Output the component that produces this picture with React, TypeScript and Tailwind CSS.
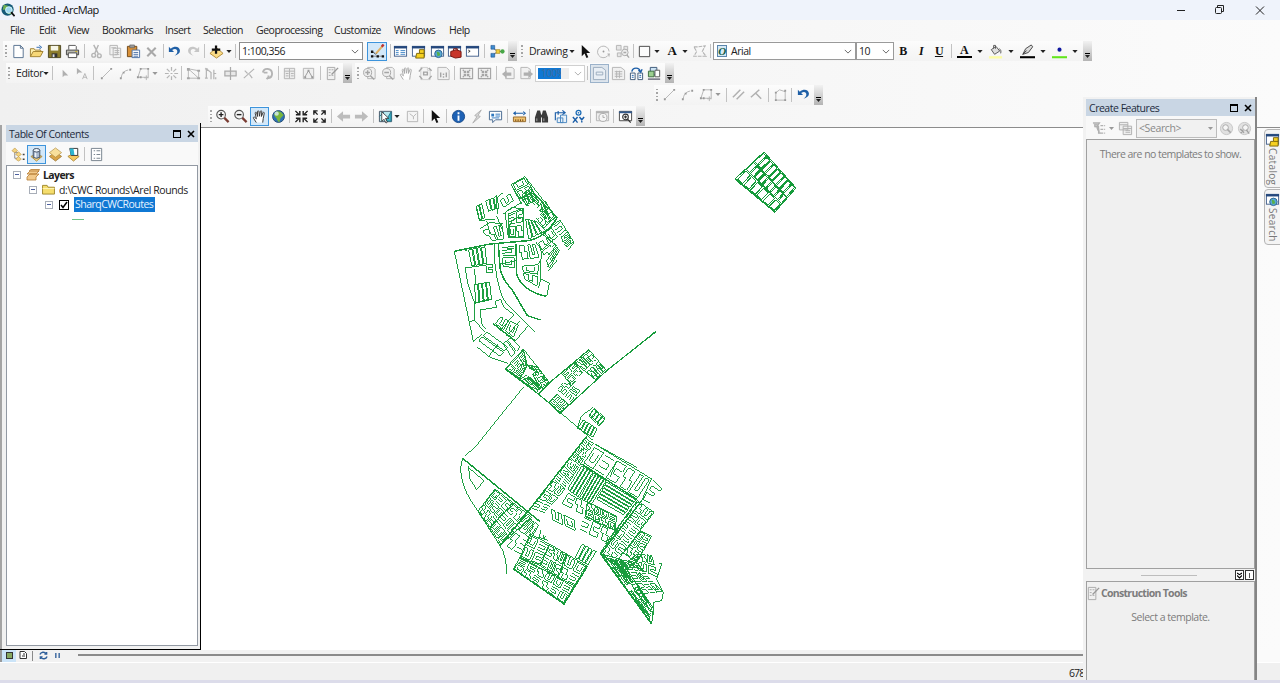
import React from "react";

type Pt = [number, number];
type Quad = [Pt, Pt, Pt, Pt];

/* ---------- icons (16 x 16 grid) ---------- */

const G = "#b4b4b4";
const mag = (c: string, h: string, plus: boolean) => (
  <>
    <circle cx="6.5" cy="6" r="4.6" fill="#f7f7f7" stroke={c} strokeWidth="1.2" />
    <path d="M10 9.5l4.5 4.5" stroke={h} strokeWidth="2.4" />
    <path d={plus ? "M4 6h5M6.5 3.5v5" : "M4 6h5"} stroke="#222" strokeWidth="1.5" />
  </>
);
const hand = (c: string) => (
  <path d="M4.6 14.5L1.6 9.8c-.5-1 .6-1.600 1.300-.9L4.700 10.500 3.400 4.500c-.2-1.200 1.200-1.400 1.500-.4L6 8 5.800 2.800c0-1.200 1.500-1.200 1.600 0L8 7.700l.9-5.100c.2-1.100 1.600-.9 1.500.2L10 8l1.700-4c.4-1 1.700-.5 1.400.5L12 10l-.6 4.500" fill="#fff" stroke={c} strokeWidth="1" />
);
const page = (c: string, fill = "#fff") => <path d="M3 1.500h7l3 3v10H3zM10 1.500v3h3" fill={fill} stroke={c} />;
const windowBox = (
  <>
    <rect x="1.500" y="2.500" width="13" height="10.500" fill="#fff" stroke="#44608c" />
    <path d="M1 3.500h14" stroke="#24477c" strokeWidth="2.500" />
  </>
);
const undoArrow = (c: string) => (
  <path d="M2 3v5.500h5.500L5.500 6.500c3-2 5.500-1 5.500 1.500 0 2-1 3-3 4.500 4-1 6-3 5.800-5.500C13.500 3 8.500 1.500 4 5z" fill={c} />
);
const editPoly = (
  <>
    <path d="M2 12L5 3h8v9z" fill="none" stroke={G} />
    <path d="M11 10v5M8.500 12.500h5" stroke={G} />
    <path d="M1 11h2v2H1zM4 2h2v2H4zM12 2h2v2h-2zM4 11h2v2H4z" fill="#999" />
  </>
);

const icons: Record<string, React.ReactNode> = {
  new: page("#55708f"),
  open: (
    <>
      <path d="M1.500 13.500V5h4l1 1.500h6v2" fill="#fdf0b0" stroke="#a08030" />
      <path d="M1.500 13.500L4.500 8h10.500l-3 5.500z" fill="#f7d878" stroke="#a08030" />
      <path d="M8 3.500h4M11 1.500l2.500 2-2.500 2" stroke="#2a66b0" fill="none" />
    </>
  ),
  save: (
    <>
      <path d="M1.500 1.500h13v13h-13z" fill="#8c7c2c" stroke="#4c4420" />
      <path d="M4 2h8v5H4z" fill="#f6f6e8" />
      <path d="M5 10h6v4H5z" fill="#333" />
      <path d="M6 11h2v3H6z" fill="#ddd" />
    </>
  ),
  print: (
    <>
      <path d="M4 6V1.500h7l1 1V6" fill="#fff" stroke="#555" />
      <path d="M1.500 6.500h13v5h-13z" fill="#b9b9b0" stroke="#444" />
      <path d="M3.500 9.500h9v5h-9z" fill="#fff" stroke="#444" />
      <path d="M11 8h2" stroke="#d0b020" />
    </>
  ),
  cut: (
    <>
      <path d="M5 1l5 9.500M10 1L6 10.500" stroke={G} strokeWidth="1.500" />
      <circle cx="5" cy="12" r="2" fill="none" stroke={G} strokeWidth="1.500" />
      <circle cx="11" cy="12.500" r="2" fill="none" stroke={G} strokeWidth="1.500" />
    </>
  ),
  copy: <path d="M2 1.500h8v10H2zM5.500 4.500h8v10h-8zM7 7h5M7 9h5M7 11h5M3.500 4h5" fill="#f2f2f2" stroke={G} />,
  paste: (
    <>
      <path d="M1.500 2.500h10v11h-10z" fill="#d89038" stroke="#704818" />
      <path d="M4 1h5v3H4z" fill="#999" stroke="#555" strokeWidth=".6" />
      <path d="M6.500 6.500h8v8h-8zM8 9h5M8 11h5M8 13h5" fill="#fff" stroke="#4a6fa5" />
    </>
  ),
  del: <path d="M3.500 4l9 9M12.500 4l-9 9" stroke="#a8a8a8" strokeWidth="2.200" />,
  undo: undoArrow("#1f5fa6"),
  redo: <g transform="translate(16 0) scale(-1 1)">{undoArrow("#c6c6c6")}</g>,
  add: (
    <>
      <path d="M8 4l7 6-7 5-7-5z" fill="#fbdc86" stroke="#b08a38" />
      <path d="M3 6h9M7.500 1.500v9" stroke="#111" strokeWidth="2.400" />
    </>
  ),
  editortb: (
    <>
      <path d="M2 13h11" fill="none" stroke="#888" />
      <path d="M1 7h2.500v2.500H1zM1 12h2.500v2.500H1zM7 12h2.500v2.500H7zM12.500 12H15v2.500h-2.500z" fill="#111" />
      <path d="M3 8l3 3 3-3" stroke="#333" fill="none" />
      <path d="M6.500 10l7-8" stroke="#e2b060" strokeWidth="2.200" />
      <path d="M12.500 3L14.500.5" stroke="#b33" strokeWidth="2.500" />
    </>
  ),
  table: (
    <>
      {windowBox}
      <path d="M3 7h3M3 9h3M3 11h3M8 7h5M8 9h5M8 11h5" stroke="#4386c5" />
    </>
  ),
  catalog: (
    <>
      {windowBox}
      <path d="M6 10h3V6h5v9H5z" fill="#f5d020" stroke="#7c6408" />
      <path d="M9 10h5" stroke="#7c6408" />
    </>
  ),
  searchw: (
    <>
      {windowBox}
      <circle cx="9" cy="10.500" r="4" fill="#58a8d8" stroke="#2c6390" />
      <path d="M7 8l3 1 1 3-3 1z" fill="#57b048" />
    </>
  ),
  toolbox: (
    <>
      {windowBox}
      <path d="M4 8l6-2 5 2v6l-6 1-5-2z" fill="#c8362b" stroke="#74150f" />
      <path d="M7 7V5h4v2" fill="none" stroke="#74150f" />
    </>
  ),
  python: (
    <>
      {windowBox}
      <path d="M3.500 6.500l2 1.200-2 1.200" stroke="#333" fill="none" />
    </>
  ),
  model: (
    <>
      <path d="M3 4l5 4-5 4M8 8h5" stroke="#555" fill="none" />
      <path d="M1 1.500h4v4H1zM1 10h4v4H1z" fill="#3d8bd0" stroke="#1a4f8a" strokeWidth=".6" />
      <path d="M6.500 6h4v4h-4z" fill="#f2cf3a" stroke="#957a10" strokeWidth=".6" />
      <circle cx="13.300" cy="8" r="2.300" fill="#47a747" />
    </>
  ),
  arrow: <path d="M4 1v12l3-2.800 2 4.800 2-.9-2-4.600h4z" fill="#111" />,
  rotate: (
    <>
      <path d="M12.500 12.500A6.200 6.200 0 1 1 14 8" fill="none" stroke={G} />
      <path d="M12 10h3l-1 4z" fill={G} />
      <circle cx="8" cy="8" r="1" fill="#999" />
    </>
  ),
  zoomsel: (
    <>
      <path d="M1.500 1.500h5v5h-5zM9.500 2.500h4v4h-4zM2.500 9.500h4v4h-4z" fill="#e6e6e6" stroke={G} />
      <circle cx="10.500" cy="9" r="3.500" fill="#eee" stroke="#aaa" />
      <path d="M12.500 11.500l2.500 3M9 9h3" stroke="#aaa" strokeWidth="1.500" />
    </>
  ),
  rect: <path d="M2.500 2.500h11v11h-11z" fill="#fcfcfc" stroke="#444" />,
  vert: <path d="M2 3h5l7-1-3 6 4 5H2l3-5z" fill="none" stroke={G} strokeDasharray="4 1" strokeWidth="1.200" />,
  bucket: (
    <>
      <path d="M3.500 6l5-3.500 4 5-5.500 3.500z" fill="#ddd" stroke="#555" />
      <path d="M6 5V1.500h2V5M12 5c2 1 2 3 1.500 5" stroke="#555" fill="none" />
      <path d="M1 13h14v2.500H1z" fill="#fdfda6" />
    </>
  ),
  pen: (
    <>
      <path d="M3 11l3-6 6-4 1.500 2L9 9z" fill="#ddd" stroke="#444" />
      <path d="M3 11l4-4" stroke="#333" />
      <path d="M0 13h16v2.200H0z" fill="#000" />
    </>
  ),
  marker: (
    <>
      <circle cx="8" cy="6" r="2.200" fill="#1018a0" />
      <path d="M0 13h16v2.200H0z" fill="#62e51c" />
    </>
  ),
  ediArrow: <path d="M6 4v8l2-2h4z" fill="#b0b0b0" />,
  ediArrowA: (
    <>
      <path d="M2 2v7l2-2h4z" fill="#b0b0b0" />
      <path d="M8 14l2.500-6 2.500 6M9 12h3" stroke={G} fill="none" />
    </>
  ),
  line: (
    <>
      <path d="M3.500 12.500l9-9" stroke={G} />
      <path d="M2 12h2v2H2zM12 2h2v2h-2z" fill="#999" />
    </>
  ),
  arc: (
    <>
      <path d="M3.500 12.500Q4 5 12.500 4" stroke={G} fill="none" strokeDasharray="5 2" />
      <path d="M2 12h2v2H2zM12 3h2v2h-2zM5 6h2v2H5z" fill="#999" />
    </>
  ),
  poly: editPoly,
  star: <path d="M8 1v4M8 11v4M1 8h4M11 8h4M3 3l3 3M10 10l3 3M13 3l-3 3M6 10l-3 3M7 8h2" stroke={G} strokeWidth="1.300" />,
  ed1: (
    <>
      <path d="M2.500 3v10h11zM2.500 3l11 2v8" fill="none" stroke={G} />
      <path d="M1 2h3v3H1zM1 12h3v2H1zM12 12h3v2h-3zM12 4h3v2h-3z" fill="#a6a6a6" />
    </>
  ),
  ed2: <path d="M2.500 13V3l5 4v7M1 3h3M1 13h3M10.500 4v10M10 8h3M12.500 12v2" fill="none" stroke={G} strokeWidth="1.300" />,
  ed3: <path d="M2 5.500h12v5H2zM8 1v14" fill="#e8e8e8" stroke="#aaa" strokeWidth="1.300" />,
  ed4: <path d="M3 13L14 3M4 5l3 3M9 9l3 4" stroke={G} strokeWidth="1.200" />,
  ed5: <path d="M3 7a5 5 0 1 1 6 6v-3M9 12l-2 2M4 7h4" fill="none" stroke={G} strokeWidth="2" />,
  ed6: <path d="M2.500 2.500h11v11h-11zM2.500 5.500h11M8 3v10M4 8h3M4 10.500h3M9.500 8h3M9.500 10.500h3" fill="#ececec" stroke={G} />,
  ed7: (
    <>
      <path d="M2.500 2.500h11v11h-11z" fill="#f0f0f0" stroke={G} />
      <path d="M4 12l4-7 4 7" stroke="#999" fill="none" />
      <path d="M7 4h2v2H7zM3.500 11h2v2h-2zM11 11h2v2h-2z" fill="#999" />
    </>
  ),
  ed8: (
    <>
      <path d="M2.500 1.500h8v13h-8zM4 4h2M4 7h2M4 10h2M7 4h2M7 10h2" fill="#f0f0f0" stroke="#aaa" />
      <path d="M7 9l7-7" stroke="#999" strokeWidth="1.500" />
    </>
  ),
  lzin: (
    <>
      <path d="M6 1.500h6l2 2v10H6z" fill="#f1f1f1" stroke={G} />
      <circle cx="6" cy="7" r="4.300" fill="#eee" stroke="#a5a5a5" />
      <path d="M9 10.500l4 4M3.500 7h5M6 4.500v5" stroke="#a5a5a5" strokeWidth="1.500" />
    </>
  ),
  lzout: (
    <>
      <path d="M6 1.500h6l2 2v10H6z" fill="#f1f1f1" stroke={G} />
      <circle cx="6" cy="7" r="4.300" fill="#eee" stroke="#a5a5a5" />
      <path d="M9 10.500l4 4M3.500 7h5" stroke="#a5a5a5" strokeWidth="1.500" />
    </>
  ),
  lhand: hand("#a8a8a8"),
  lfull: (
    <>
      {page("#cfcfcf", "#f4f4f4")}
      <path d="M1.500 6V5l3-3M11.500 2l3 3M1.500 10.500l3 3.500M14.500 10.500l-3 3.500M6 6.500h4v3H6z" stroke="#a5a5a5" strokeWidth="1.500" />
    </>
  ),
  l11: (
    <>
      <path d="M2 1.500h9l3 3v10H2z" fill="#f1f1f1" stroke={G} />
      <path d="M5 7v5M11 7v5M8 8v1.500M8 11v1.500" stroke="#a5a5a5" strokeWidth="1.500" />
    </>
  ),
  lfix: <path d="M1.500 2.500h13v11h-13zM4 4l3 3M12 4L9 7M4 12l3-3M12 12L9 9M5 7h2V5M9 5v2h2M5 9h2v2M11 9H9v2" fill="#efefef" stroke="#a5a5a5" strokeWidth="1.200" />,
  lback: (
    <>
      <path d="M5 1.500h7l2 2v10H5z" fill="#f1f1f1" stroke={G} />
      <path d="M1 8.500l5-4v2.500h5v3.500H6V13z" fill="#b0b0b0" />
    </>
  ),
  lfwd: (
    <>
      <path d="M2 1.500h7l3 2v10H2z" fill="#f1f1f1" stroke={G} />
      <path d="M15 8.500l-5-4v2.500H5v3.500h5V13z" fill="#b0b0b0" />
    </>
  ),
  ltog: <path d="M1.500 1.500h9l4 3v10h-13zM4.500 6.500h7v3h-7z" fill="#e9eff5" stroke="#9aabbd" />,
  lfocus: <path d="M1.500 1.500h9l4 3v10h-13zM4 6h8M4 8.500h8M4 11h8M6 5v8M9 5v8" fill="#f0f0f0" stroke={G} />,
  lchg: (
    <>
      <path d="M1.500 7.500h5v7h-5zM9.500 7.500h5v7h-5z" fill="#fff" stroke="#3c5677" />
      <path d="M3 6c1-5 8-5 9 0M10 4.500l2.500 2 1.500-3" fill="none" stroke="#1c5ea8" strokeWidth="1.500" />
      <path d="M3 10h2M3 12h2M11 10h2M11 12h2" stroke="#1c5ea8" />
    </>
  ),
  ldd: (
    <>
      <path d="M3.500 1.500h7v8h-7z" fill="#cde4f5" stroke="#3c5677" />
      <path d="M1.500 5.500h6v6h-6z" fill="#9ccf90" stroke="#3c6b40" />
      <path d="M8.500 4.500h5v7h-5z" fill="#fff" stroke="#555" />
      <path d="M1 14h13" stroke="#667" strokeWidth="1.500" />
    </>
  ),
  par: <path d="M2 11l8-8M6 13l8-8" stroke="#b0b0b0" strokeWidth="1.600" />,
  perp: <path d="M2 11l9-8M7 6.500l6 6" stroke="#b0b0b0" strokeWidth="1.600" />,
  rectedit: (
    <>
      <path d="M3 14V6l4-3 6 2v9z" fill="none" stroke={G} />
      <path d="M2 5h2v2H2zM2 13h2v2H2zM12 13h2v2h-2zM12 3h2v2h-2z" fill="#999" />
    </>
  ),
  zin: mag("#555", "#7a3b32", true),
  zout: mag("#555", "#7a3b32", false),
  hand: hand("#333"),
  globe: (
    <>
      <circle cx="8" cy="8" r="6.300" fill="#2f71b6" stroke="#244c70" />
      <path d="M6 2.500c4-1 6 2 7.500 4L10 10l-1 4c-3-1-2-4-4-5L3 6z" fill="#79b63c" />
      <circle cx="6" cy="5" r="2.300" fill="#e3f4ff" opacity=".75" />
    </>
  ),
  fixin: <path d="M1.500 2l3.500 3.500M14.500 2L11 5.500M1.500 14L5 10.500M14.500 14L11 10.500M2 6.200h4.200V2M14 6.200H9.800V2M2 9.800h4.200V14M14 9.800H9.800V14" fill="none" stroke="#222" strokeWidth="1.500" />,
  fixout: <path d="M2.500 2.500L6 6M13.500 2.500L10 6M2.500 13.500L6 10M13.500 13.500L10 10M2 6V2h4M14 6V2h-4M2 10v4h4M14 10v4h-4" fill="none" stroke="#222" strokeWidth="1.500" />,
  back: <path d="M1 8l6.500-5.500v3.500H15v4H7.500v3.500z" fill="#bcbcbc" />,
  fwd: <path d="M15 8L8.500 2.500V6H1v4h7.500v3.500z" fill="#bcbcbc" />,
  selfeat: (
    <>
      <path d="M1.500 2.500h13v11h-13z" fill="#b9e8ee" stroke="#456" />
      <path d="M14 3v10H8zM1.500 8l5-5" fill="#3bb6c8" stroke="#26748a" />
      <path d="M4 3v10l2.500-2 2 4 1.500-1-2-4h3.500z" fill="#fff" stroke="#222" strokeWidth=".8" />
    </>
  ),
  clr: <path d="M2.500 2.500h11v11h-11zM5 5l4 3 3-3M9 8v3" fill="#f4f4f4" stroke={G} />,
  info: (
    <>
      <circle cx="8" cy="8" r="6.500" fill="#1e62b5" stroke="#174a8a" />
      <path d="M8 7v5.500M8 3.500v2" stroke="#fff" strokeWidth="2" />
    </>
  ),
  bolt: <path d="M12 1L5 7l2.500 1L3 15l8-7-2.500-1z" fill="#d7d7d7" stroke="#b0b0b0" />,
  popup: (
    <>
      <path d="M1.500 2.500h13v9H8l-3 3v-3H1.500z" fill="#fff" stroke="#44688f" />
      <path d="M3.500 5h3v3h-3z" fill="#2f78bf" />
      <path d="M8 5.500h5M8 7.500h5M4 9.500h8" stroke="#2f78bf" />
    </>
  ),
  measure: (
    <>
      <path d="M1.500 8.500h13v5h-13z" fill="#f0c270" stroke="#93662a" />
      <path d="M4 13v-2M6.500 13v-2M9 13v-2M11.500 13v-2" stroke="#704510" />
      <path d="M1 4.500l3-2.500v5zM15 4.500L12 2v5zM3 4h10v1H3z" fill="#1b5ea8" />
    </>
  ),
  find: (
    <>
      <path d="M3.500 1.500h3l1 4v9H1V9zM12.500 1.500h-3l-1 4v9H15V9z" fill="#3c3c3c" />
      <path d="M3 10v3M10.500 10v3" stroke="#aaa" />
      <path d="M6 6h4v3H6z" fill="#3c3c3c" />
    </>
  ),
  route: (
    <>
      <path d="M4.500 9.500h6v5h-6zM8 6.500h6.500v8H8z" fill="#e7f1fa" stroke="#4684be" />
      <path d="M2.500 12V4h10M10 1.500l3 2.500-3 2M5.500 2v4" fill="none" stroke="#1b5ea8" strokeWidth="1.200" />
    </>
  ),
  xy: (
    <>
      <circle cx="8" cy="4" r="2.600" fill="none" stroke="#1b6bb5" strokeWidth="1.300" />
      <circle cx="8" cy="4" r=".9" fill="#1b6bb5" />
      <path d="M2 8.500l5 6M7 8.500l-5 6M9 8.500l2.500 3 2.500-3M11.500 11.500v3" stroke="#1b5ea8" strokeWidth="1.500" fill="none" />
    </>
  ),
  time: (
    <>
      <path d="M1.500 2.500h13v10h-13z" fill="#eee" stroke={G} />
      <path d="M1 3.500h14" stroke={G} strokeWidth="2" />
      <circle cx="8.500" cy="9" r="4.300" fill="#f5f5f5" stroke="#aaa" />
      <path d="M8.500 6.500V9h2" stroke="#aaa" fill="none" />
    </>
  ),
  viewer: (
    <>
      <path d="M1.500 2.500h13v10h-13z" fill="#fff" stroke="#444" />
      <path d="M1 3.500h14" stroke="#345a8c" strokeWidth="2" />
      <circle cx="8" cy="8.500" r="3" fill="#fff" stroke="#333" strokeWidth="1.200" />
      <path d="M10 10.500l3.500 4M6.500 8.500h3M8 7v3" stroke="#333" strokeWidth="1.300" />
    </>
  ),
  listOrder: (
    <>
      <path d="M4 5v7h3M4 6h4" stroke="#888" fill="none" />
      <path d="M1 4l3-3 3 3-3 2zM5 8l3-3 3 3-3 2zM5 13l3-3 3 3-3 2z" fill="#f4d480" stroke="#c09a48" strokeWidth=".7" />
      <path d="M12.500 8h2M12.500 13h2" stroke="#444" strokeWidth="1.500" />
    </>
  ),
  listSrc: (
    <>
      <path d="M2 10l6-2 6 2-6 5z" fill="#f4d480" stroke="#b08d3e" />
      <path d="M4.500 3.500v7.500q3.500 2 7 0V3.500" fill="#a9b9cf" stroke="#3c4c60" />
      <path d="M7 5v6" stroke="#eef3f8" strokeWidth="1.500" />
      <ellipse cx="8" cy="3.500" rx="3.500" ry="1.900" fill="#edf3f9" stroke="#3c4c60" />
    </>
  ),
  listVis: (
    <>
      <path d="M8 5l6.500 5L8 15l-6.500-5z" fill="#d8a348" stroke="#8f6b28" strokeWidth=".7" />
      <path d="M8 1l6.500 5L8 11 1.500 6z" fill="#f8df9c" stroke="#b08d3e" strokeWidth=".7" />
    </>
  ),
  listSel: (
    <>
      <path d="M2 10l6-3 6 3-6 5z" fill="#f4c860" stroke="#b08d3e" />
      <path d="M4 1.500h8.500V9h-7z" fill="#fff" stroke="#333" />
      <path d="M4 1.500h4l1 7H5z" fill="#2cb5d0" />
    </>
  ),
  opts: <path d="M2.500 1.500h11v13h-11zM5 4h1.500M5 8h1.500M5 12h1.500M8 4h4M8 8h4M8 12h4" fill="#fff" stroke="#74808c" />,
  org: <path d="M1 2h7l-2 3v5M3 4h3v2H3zM9 5h3M9 9h3M9 13h3M7 5v8h2M13 5h1M13 9h1M13 13h1" fill="#ccc" stroke="#b0b0b0" strokeWidth="1.300" />,
  orgt: <path d="M1.500 1.500h9v8h-9zM1.500 4h9M5.500 5.500h9v9h-9zM5.500 8h9M8 10h5M8 12h5" fill="#eee" stroke="#b0b0b0" />,
  qs: (
    <>
      <circle cx="8" cy="8" r="6.500" fill="#e1e1e1" stroke="#c5c5c5" />
      <circle cx="7" cy="7" r="3" fill="#f6f6f6" stroke="#a8a8a8" />
      <path d="M9 9l3.500 3.500" stroke="#a8a8a8" strokeWidth="1.700" />
    </>
  ),
  qs2: (
    <>
      <circle cx="8" cy="8" r="6.500" fill="#e1e1e1" stroke="#c5c5c5" />
      <circle cx="9" cy="7" r="3" fill="#f6f6f6" stroke="#a8a8a8" />
      <path d="M4 13l2.500-3.500M10 9.500l3 4M3.500 8.500l4 4" stroke="#a0a0a0" strokeWidth="1.500" />
    </>
  ),
};

function Ic({ n, className = "" }: { n: string; className?: string }) {
  return (
    <span className={`flex h-[20px] w-[18px] shrink-0 items-center justify-center ${className}`}>
      <svg viewBox="0 0 16 16" className="h-[15px] w-[15px]" fill="none">
        {icons[n]}
      </svg>
    </span>
  );
}
const Sep = ({ className = "" }: { className?: string }) => (
  <span className={`flex w-[6px] shrink-0 items-center justify-center ${className}`}>
    <span className="h-[14px] w-px bg-[#c2c2c2]" />
  </span>
);
const Grip = () => (
  <span className="flex w-[6px] shrink-0 flex-col items-center gap-[2px]">
    <i className="size-[1.500px] bg-[#a5a5a5]" />
    <i className="size-[1.500px] bg-[#a5a5a5]" />
    <i className="size-[1.500px] bg-[#a5a5a5]" />
    <i className="size-[1.500px] bg-[#a5a5a5]" />
  </span>
);
const Caret = ({ className = "" }: { className?: string }) => (
  <svg viewBox="0 0 7 4" className={`h-[3px] w-[6px] shrink-0 ${className}`}>
    <path d="M0 0h7L3.500 4z" fill="currentColor" />
  </svg>
);
const Chevron = ({ className = "" }: { className?: string }) => (
  <svg viewBox="0 0 10 6" className={`ml-auto h-[5px] w-[8px] shrink-0 text-[#666] ${className}`}>
    <path d="M1 1l4 4 4-4" fill="none" stroke="currentColor" strokeWidth="1.200" />
  </svg>
);
const More = () => (
  <span className="flex h-[20px] w-[9px] shrink-0 flex-col items-center justify-end gap-[1px] bg-linear-to-b from-[#f2f2f2] to-[#b4b4b4] pb-[3px]">
    <i className="h-px w-[5px] bg-black" />
    <Caret className="!w-[5px]" />
  </span>
);
const Letter = ({ c, className = "", bar = "" }: { c: string; className?: string; bar?: string }) => (
  <span className={`flex h-[20px] w-[18px] shrink-0 flex-col items-center justify-center font-['Liberation_Serif',serif] text-[12px] leading-[12px] font-bold text-[#111] ${className}`}>
    {c}
    {bar && <i className={`h-[2px] w-[15px] ${bar}`} />}
  </span>
);

/* ---------- map ---------- */

const at = (q: Quad, u: number, v: number): Pt => [
  (1 - v) * ((1 - u) * q[0][0] + u * q[1][0]) + v * ((1 - u) * q[3][0] + u * q[2][0]),
  (1 - v) * ((1 - u) * q[0][1] + u * q[1][1]) + v * ((1 - u) * q[3][1] + u * q[2][1]),
];

const parcels: Pt[][][] = [
  [[[0.1, 0.1], [0.9, 0.1], [0.9, 0.9], [0.1, 0.9], [0.1, 0.1]], [[0.3, 0.3], [0.3, 0.7], [0.7, 0.7], [0.7, 0.3]]],
  [[[0.1, 0.1], [0.9, 0.1], [0.9, 0.38], [0.35, 0.38], [0.35, 0.62], [0.9, 0.62], [0.9, 0.9], [0.1, 0.9], [0.1, 0.1]]],
  [[[0.1, 0.9], [0.1, 0.1], [0.38, 0.1], [0.38, 0.7], [0.62, 0.7], [0.62, 0.1], [0.9, 0.1], [0.9, 0.9], [0.1, 0.9]]],
  [[[0.1, 0.15], [0.9, 0.15]], [[0.1, 0.4], [0.75, 0.4], [0.75, 0.65], [0.1, 0.65]], [[0.1, 0.88], [0.9, 0.88]]],
  [[[0.1, 0.1], [0.65, 0.1], [0.65, 0.5], [0.9, 0.5], [0.9, 0.9], [0.35, 0.9], [0.35, 0.5], [0.1, 0.5], [0.1, 0.1]]],
];
const polyline = (pts: Pt[]) => pts.map((p, i) => (i ? "L" : "M") + p[0].toFixed(1) + " " + p[1].toFixed(1)).join("");

function district(q: Quad, cols: number, rows: number, seed: number, frame = true): string {
  let d = frame ? polyline([q[0], q[1], q[2], q[3], q[0]]) : "";
  for (let i = 0; i < cols; i++)
    for (let j = 0; j < rows; j++) {
      const shape = parcels[(i * 3 + j * 2 + seed + ((i * j) % 3)) % parcels.length];
      shape.forEach((s) => (d += polyline(s.map(([u, v]) => at(q, (i + u) / cols, (j + v) / rows)))));
    }
  return d;
}

/* Rows of long closed blocks running from the first edge to the opposite one. */
function strips(q: Quad, n: number): string {
  let d = "";
  for (let i = 0; i < n; i++) {
    const a = (i + 0.12) / n;
    const b = (i + 0.88) / n;
    d += polyline([at(q, a, 0), at(q, b, 0), at(q, b, 1), at(q, a, 1), at(q, a, 0)]);
  }
  return d;
}

type D = [Quad, number, number, boolean?];
const north: D[] = [
  [[[213, 62], [255, 38], [282, 85], [240, 105]], 1, 2],
  [[[245, 105], [278, 82], [348, 158], [312, 192]], 3, 2],
  [[[175, 110], [212, 85], [225, 110], [190, 135]], 1, 1, false],
  [[[205, 150], [250, 132], [252, 222], [205, 222]], 2, 2],
  [[[122, 198], [188, 175], [195, 230], [152, 235]], 2, 1, false],
  [[[310, 205], [360, 168], [382, 200], [332, 240]], 2, 1, false],
  [[[360, 220], [385, 200], [402, 235], [375, 255]], 1, 2, false],
  [[[290, 235], [335, 215], [362, 255], [326, 322]], 1, 3, false],
  [[[182, 248], [225, 240], [228, 315], [185, 310]], 1, 2, false],
  [[[235, 240], [285, 235], [302, 285], [235, 292]], 2, 1, false],
  [[[240, 305], [302, 298], [295, 372], [250, 345]], 1, 2, false],
  [[[135, 300], [160, 298], [160, 328], [138, 330]], 1, 1, false],
  [[[180, 455], [240, 480], [222, 525], [162, 480]], 2, 1, false],
];
const northStrips: [Quad, number][] = [
  [[[84, 258], [136, 248], [142, 298], [94, 306]], 4],
  [[[102, 362], [150, 354], [156, 405], [106, 416]], 4],
  [[[142, 502], [115, 532], [178, 578], [205, 548]], 2],
  [[[215, 520], [188, 540], [212, 580], [242, 548]], 2],
  [[[108, 128], [126, 118], [136, 160], [118, 170]], 2],
  [[[136, 112], [172, 96], [178, 132], [144, 142]], 3],
  [[[256, 165], [290, 172], [318, 200], [264, 226]], 4],
  [[[300, 118], [318, 112], [345, 160], [318, 186]], 2],
  [[[246, 92], [274, 70], [292, 105], [262, 122]], 3],
];
const middle: D[] = [
  [[[195, 150], [250, 90], [262, 140], [240, 180]], 3, 2],
  [[[240, 180], [262, 168], [310, 210], [295, 225]], 3, 1],
  [[[265, 140], [292, 142], [328, 190], [300, 210]], 3, 2],
  [[[365, 163], [402, 130], [428, 162], [395, 200]], 2, 2],
  [[[402, 130], [447, 92], [500, 155], [470, 185]], 4, 2],
  [[[325, 250], [350, 225], [388, 258], [360, 283]], 2, 2],
  [[[350, 210], [372, 185], [425, 215], [392, 252]], 2, 2, false],
];
const middleStrips: [Quad, number][] = [
  [[[447, 290], [462, 267], [497, 298], [478, 322]], 1],
  [[[462, 267], [497, 298], [478, 322], [447, 290]], 4],
  [[[428, 302], [473, 330], [460, 355], [412, 328]], 5],
];
const south: D[] = [
  [[[135, 180], [190, 222], [118, 298], [85, 245]], 3, 3],
  [[[190, 222], [245, 265], [150, 350], [118, 298]], 3, 3],
  [[[245, 265], [270, 285], [215, 385], [155, 350]], 2, 2, false],
  [[[408, 22], [432, 42], [345, 185], [310, 152]], 2, 6, false],
  [[[310, 152], [348, 180], [285, 255], [240, 240]], 2, 3, false],
  [[[434, 48], [605, 148], [562, 215], [395, 105]], 5, 1, false],
  [[[355, 188], [405, 215], [400, 262], [330, 225]], 2, 1, false],
  [[[300, 235], [375, 270], [380, 310], [305, 275]], 2, 1, false],
  [[[400, 255], [485, 300], [470, 345], [385, 305]], 3, 1, false],
  [[[412, 218], [500, 262], [495, 305], [405, 262]], 4, 2],
  [[[240, 315], [298, 345], [272, 410], [210, 385]], 2, 2],
  [[[298, 345], [350, 375], [325, 445], [270, 410]], 3, 2],
  [[[350, 375], [412, 412], [372, 470], [325, 445]], 2, 2],
  [[[210, 385], [372, 470], [342, 525], [190, 420]], 6, 2],
  [[[562, 215], [612, 250], [492, 408], [450, 372]], 2, 6],
  [[[572, 305], [605, 322], [560, 400], [520, 372]], 2, 3],
  [[[562, 375], [605, 375], [628, 450], [520, 400]], 3, 2, false],
  [[[500, 385], [560, 400], [640, 490], [560, 500]], 4, 3, false],
  [[[455, 375], [510, 390], [612, 540], [605, 583]], 6, 2],
];
const southStrips: [Quad, number][] = [
  [[[395, 110], [430, 130], [385, 205], [352, 180]], 4],
  [[[430, 130], [470, 156], [424, 228], [388, 206]], 5],
  [[[470, 158], [440, 212], [520, 258], [558, 212]], 6],
  [[[395, 345], [440, 368], [415, 408], [375, 385]], 4],
  [[[272, 300], [300, 318], [298, 335], [265, 325]], 2],
];
const net = (list: D[]) => list.map(([q, c, r, f], i) => district(q, c, r, i, f !== false)).join("");
const lanes = (list: [Quad, number][]) => list.map(([q, n]) => strips(q, n)).join("");

function RouteMap() {
  return (
    <svg className="block h-full w-full" viewBox="201 129 882 522" fill="none" stroke="#169b3b" strokeWidth="1" shapeRendering="crispEdges">
      <g transform="translate(440 165) scale(.33333)" strokeWidth="2.900">
        <path d={net(north) + lanes(northStrips)} />
        <path d="M43 262L100 532L125 512M165 240V300Q175 390 200 420L285 505M255 38L350 160M75 258L82 262M75 312L160 300M75 312L84 360L104 418L105 470L88 472M103 315L108 360M105 470L135 505M120 438L125 480L138 496M120 438L170 430L165 412L182 406L192 430L222 452L180 500M265 485L225 532M240 470L200 515M110 548L150 580L205 598M145 578L175 540M325 322L352 288M288 235Q320 270 295 300M303 290V345L328 358L320 397M303 345L295 372M170 155L190 205M168 92L172 150M190 85L172 100M195 145L245 115M120 195L150 175L190 180M195 145L205 222M140 170L150 210M213 62L245 120M190 150L215 130L250 135M205 195Q215 155 250 160M300 205L350 245M200 255H222M205 275H224M180 300L228 290M108 128L118 170L165 165M310 205L360 168L402 235L385 258M320 310L352 270" />
        <path d="M43 262L150 240L265 230Q315 222 352 160M175 240L180 310Q185 345 215 375L262 455L302 468M228 240L230 330Q245 380 318 397M158 478L225 530M102 418L155 405" strokeWidth="4.500" />
        <path d="M262 125l28-2 4 18 8 2-2 18-38 2z" fill="#fff" stroke="none" />
      </g>
      <g transform="translate(440 320) scale(.33333)" strokeWidth="2.900">
        <path d={net(middle) + lanes(middleStrips)} />
        <path d="M250 90L328 190M325 250L460 365M250 205L165 310L105 385L75 410M500 155L648 36M465 375L590 445M425 290L412 325M425 290L460 265" />
        <path d="M262 145l22 12-14 18-20-12z" fill="#fff" stroke="none" />
        <path d="M405 180l30-22 26 22-28 30-22-8z" fill="#fff" stroke="none" />
        <path d="M195 150L295 225L330 190L447 92M295 225L325 250L360 283L500 155L648 38" strokeWidth="3.500" />
      </g>
      <g transform="translate(450 430) scale(.33333)" strokeWidth="2.900">
        <path d={net(south) + lanes(southStrips)} />
        <path d="M38 88C25 120 35 170 60 210L150 350Q170 380 170 435M55 110L60 150L80 182L102 155L58 118M434 45L605 150M608 152L635 180L630 186L605 170L598 182L615 195L610 202L590 190L580 212L600 222M465 345L562 215M605 148L575 215M605 320L600 330M628 405L635 405L620 450L640 490L635 515L612 520L605 585M500 95L480 145" />
        <path d="M285 262l96 50 16 32-24 36-76-40-26-44z" fill="#fff" stroke="none" />
        <path d="M38 88L270 278M240 240L410 22M190 420L342 525L412 412M150 350L240 240M395 105L562 212M452 375L605 585M452 375L575 215" strokeWidth="4.500" />
      </g>
      <g strokeWidth="1">
        <path d="M764 153L796 189L775 213L735 180Z" />
        <path d={strips([[763, 154], [795, 189], [787, 198], [754, 162]], 9)} />
        <path d={strips([[753, 163], [787, 199], [782, 205], [746, 170]], 9)} />
        <path d={strips([[745, 171], [781, 206], [775, 212], [737, 180]], 6)} />
        <path d="M735 180L775 213" strokeWidth="1.500" />
      </g>
    </svg>
  );
}

/* ---------- window parts ---------- */

const menus: [string, string][] = [
  ["File", "w-[29px]"], ["Edit", "w-[29px]"], ["View", "w-[34px]"], ["Bookmarks", "w-[63px]"], ["Insert", "w-[38px]"],
  ["Selection", "w-[53px]"], ["Geoprocessing", "w-[78px]"], ["Customize", "w-[60px]"], ["Windows", "w-[55px]"], ["Help", "w-[30px]"],
];

const PanelTitle = ({ title }: { title: string }) => (
  <div className="flex h-[17px] shrink-0 items-center bg-[#c9d6e4] pr-[3px] pl-[3px] text-[#1d2b3c]">
    <span className="flex-1">{title}</span>
    <span className="mr-[6px] h-[8px] w-[8px] border border-t-2 border-black" />
    <svg viewBox="0 0 8 8" className="h-[8px] w-[8px]">
      <path d="M1 1l6 6M7 1L1 7" stroke="#000" strokeWidth="1.600" />
    </svg>
  </div>
);

const Minus = () => (
  <span className="flex size-[8px] shrink-0 items-center justify-center border border-[#a8aeb8] bg-white">
    <i className="h-px w-[4px] bg-[#4c5fa0]" />
  </span>
);

const bar = "flex h-[20px] items-center bg-linear-to-b from-[#fcfcfc] to-[#f3f3f3]";

export default function App() {
  return (
    <div className="relative flex h-[683px] w-[1280px] flex-col overflow-hidden bg-linear-to-r from-[#f0f0f0] to-[#fbfbfb] font-['Open_Sans','Noto_Sans',sans-serif] text-[10.500px] leading-[14px] tracking-[-0.480px] text-[#222]">
      {/* title bar */}
      <header className="flex h-[20px] shrink-0 items-center bg-[#eff3fb] text-[11px] tracking-[-0.6px]">
        <svg viewBox="0 0 16 16" className="mr-[2px] ml-px h-[14px] w-[14px]">
          <circle cx="7.500" cy="7.500" r="7" fill="#155a78" />
          <path d="M3 2l5 1-2 4-4 1zM9 8l4 1-2 4-4-1z" fill="#6dae54" />
          <circle cx="9" cy="8" r="3.800" fill="#9bd5ef" stroke="#dff" />
          <path d="M11.500 10.500l4 4.500" stroke="#111" strokeWidth="2" />
        </svg>
        <span className="ml-[2px] flex-1 text-[#111]">Untitled - ArcMap</span>
        <svg viewBox="0 0 90 12" className="mr-[14px] h-[12px] w-[90px]" fill="none" stroke="#222">
          <path d="M1 6.500h8M80 2.500l8 8M88 2.500l-8 8" />
          <rect x="39.500" y="3.500" width="6" height="6" rx="1" />
          <path d="M41.500 3V1.500h6v6H46" />
        </svg>
      </header>

      <nav className="flex h-[21px] shrink-0 items-center pb-[1px] pl-[10px]">
        {menus.map(([m, w]) => (
          <span key={m} className={`shrink-0 whitespace-nowrap ${w}`}>{m}</span>
        ))}
      </nav>

      {/* standard + drawing toolbars */}
      <div className="flex h-[21px] shrink-0 pl-[3px]">
        <div className={bar}>
          <Grip />
          <Ic n="new" /><Ic n="open" /><Ic n="save" /><Ic n="print" />
          <Sep />
          <Ic n="cut" /><Ic n="copy" className="ml-px" /><Ic n="paste" /><Ic n="del" />
          <Sep />
          <Ic n="undo" className="-ml-px" /><Ic n="redo" className="ml-px" />
          <Sep className="-ml-px" />
          <Ic n="add" /><Caret className="ml-[1px]" />
          <Sep />
          <div className="ml-px flex h-[18px] w-[124px] items-center border border-[#8e8e8e] bg-white pr-[3px] pl-[2px] tracking-[-0.5px]">
            1:100,356
            <Chevron />
          </div>
          <span className="ml-[4px] flex h-[19px] w-[20px] items-center justify-center border border-[#3d94dc] bg-[#d3e8f9]"><Ic n="editortb" /></span>
          <Sep />
          <Ic n="table" className="-ml-[2px]" /><Ic n="catalog" /><Ic n="searchw" className="ml-px" /><Ic n="toolbox" className="-ml-px" /><Ic n="python" />
          <Sep />
          <Ic n="model" className="mr-[2px] ml-[1px]" />
          <More />
        </div>
        <div className={bar + " ml-[2px]"}>
          <Grip />
          <span className="ml-[4px] w-[41px] whitespace-nowrap tracking-[-0.3px]">Drawing</span>
          <Caret className="-ml-px mr-px" />
          <Ic n="arrow" /><Ic n="rotate" /><Ic n="zoomsel" className="ml-px" />
          <Sep className="-ml-px" />
          <Ic n="rect" className="-ml-px" /><Caret className="ml-[1px]" />
          <Letter c="A" className="ml-[3px] !text-[13px]" /><Caret className="ml-[1px]" />
          <Ic n="vert" className="ml-[2px]" />
          <Sep className="-ml-px" />
          <div className="flex h-[18px] w-[143px] items-center border border-[#9a9a9a] bg-white pr-[3px] pl-[3px]">
            <span className="mr-[4px] flex h-[12px] w-[10px] items-center justify-center border border-[#5b86ad] bg-[#d6e9f6] font-['Liberation_Serif',serif] text-[11px] font-bold text-[#135c44] italic">O</span>
            Arial
            <Chevron />
          </div>
          <div className="flex h-[18px] w-[38px] items-center border border-[#9a9a9a] bg-white pr-[3px] pl-[2px]">10<Chevron /></div>
          <Letter c="B" /><Letter c="I" className="italic" /><Letter c="U" className="underline" />
          <Sep />
          <Letter c="A" bar="bg-black" className="ml-[1px]" /><Caret className="ml-[4px]" />
          <Ic n="bucket" className="ml-[3px]" /><Caret className="ml-[4px]" />
          <Ic n="pen" className="ml-[4px]" /><Caret className="ml-[4px]" />
          <Ic n="marker" className="ml-[4px]" /><Caret className="mr-[5px] ml-[4px]" />
          <More />
        </div>
      </div>

      {/* editor + layout toolbars */}
      <div className="flex h-[22px] shrink-0 items-center pl-[6px]">
        <div className={bar}>
          <Grip />
          <span className="ml-[4px] w-[28px] whitespace-nowrap tracking-[-0.350px]">Editor</span>
          <Caret className="-ml-px" />
          <Sep />
          <Ic n="ediArrow" /><Ic n="ediArrowA" />
          <Sep className="-ml-px" />
          <Ic n="line" className="ml-px" /><Ic n="arc" className="ml-px" /><Ic n="poly" /><Caret className="text-[#999]" />
          <Ic n="star" className="ml-[4px]" />
          <Sep className="-ml-[2px]" />
          <Ic n="ed1" /><Ic n="ed2" /><Ic n="ed3" className="ml-px" /><Ic n="ed4" /><Ic n="ed5" className="ml-px" />
          <Sep className="-ml-px" />
          <Ic n="ed6" className="-ml-px" /><Ic n="ed7" className="ml-px" />
          <Sep />
          <Ic n="ed8" className="mr-[2px]" />
          <More />
        </div>
        <div className={bar + " ml-[3px]"}>
          <Grip />
          <Ic n="lzin" className="-ml-px" /><Ic n="lzout" className="ml-px" /><Ic n="lhand" /><Ic n="lfull" className="ml-px" /><Ic n="l11" />
          <Sep className="-ml-px" />
          <Ic n="lfix" /><Ic n="lfix" />
          <Sep />
          <Ic n="lback" /><Ic n="lfwd" />
          <div className="flex h-[17px] w-[50px] items-center border border-[#d0d0d0] bg-white px-[2px]">
            <span className="h-[11px] w-[23px] bg-[#0f78d4] pl-[3px] text-[10px] leading-[11px] text-[#3f6c9c]">100%</span>
            <span className="h-[11px] w-[8px] bg-[#eeeeee]" />
            <Chevron className="!text-[#b0b0b0]" />
          </div>
          <Sep className="-ml-px" />
          <span className="flex h-[19px] w-[19px] items-center justify-center border border-[#9bb2ca] bg-[#dde5ed]"><Ic n="ltog" /></span>
          <Ic n="lfocus" /><Ic n="lchg" /><Ic n="ldd" className="mr-[2px]" />
          <More />
        </div>
      </div>

      {/* feature construction toolbar */}
      <div className="flex h-[21px] shrink-0 items-center pl-[654px]">
        <div className={bar}>
          <Grip />
          <Ic n="line" /><Ic n="arc" /><Ic n="poly" className="ml-px" /><Caret className="text-[#999]" />
          <Sep className="ml-[2px]" />
          <Ic n="par" /><Ic n="perp" />
          <Sep />
          <Ic n="rectedit" />
          <Sep className="-ml-px" />
          <Ic n="undo" className="mr-[2px]" />
          <More />
        </div>
      </div>

      {/* tools toolbar */}
      <div className="flex h-[22px] shrink-0 items-center pl-[208px]">
        <div className={bar}>
          <Grip />
          <Ic n="zin" className="-ml-px" /><Ic n="zout" className="mr-px" />
          <span className="flex h-[19px] w-[19px] items-center justify-center border border-[#3d94dc] bg-[#d3e8f9]"><Ic n="hand" /></span>
          <Ic n="globe" />
          <Sep className="-ml-px" />
          <Ic n="fixin" /><Ic n="fixout" />
          <Sep />
          <Ic n="back" /><Ic n="fwd" />
          <Sep />
          <Ic n="selfeat" /><Caret /><Ic n="clr" className="ml-[3px]" />
          <Sep className="-ml-px" />
          <Ic n="arrow" />
          <Sep className="-ml-px" />
          <Ic n="info" /><Ic n="bolt" className="ml-px" /><Ic n="popup" />
          <Sep />
          <Ic n="measure" />
          <Sep className="-ml-[2px]" />
          <Ic n="find" /><Ic n="route" className="ml-px" /><Ic n="xy" />
          <Sep />
          <Ic n="time" />
          <Sep className="-ml-px" />
          <Ic n="viewer" className="mr-[2px]" />
          <More />
        </div>
      </div>

      {/* docked contents and data view */}
      <div className="flex h-[523px] shrink-0">
        <aside className="z-10 -mt-[4px] flex w-[201px] shrink-0 flex-col border-r border-b border-black bg-[#f1f1f1]">
          <div className="mt-[2px] flex min-h-0 flex-1 flex-col border-l-2 border-[#a4a4a4] pr-[2px] pb-[3px] pl-[4px]">
            <PanelTitle title="Table Of Contents" />
            <div className="flex h-[23px] shrink-0 items-center bg-[#f9f9f9] pt-px pl-[3px]">
              <Ic n="listOrder" />
              <span className="flex h-[19px] w-[19px] items-center justify-center border border-[#3d94dc] bg-[#d3e8f9]"><Ic n="listSrc" /></span>
              <Ic n="listVis" /><Ic n="listSel" />
              <Sep className="-ml-px" />
              <Ic n="opts" />
            </div>
            <div className="flex flex-1 flex-col border border-[#9299a3] bg-white pt-px">
              <div className="flex h-[15px] items-center pl-[6px] font-bold tracking-[-0.6px]">
                <Minus />
                <svg viewBox="0 0 14 12" className="mr-[3px] ml-[5px] h-[12px] w-[14px]">
                  <path d="M1 8l3-3h9l-3 3v3H1zM1 5l3-3h9l-3 3zM3 2l2-1.500h8.500L12 3" fill="#f2c98a" stroke="#b57b34" strokeWidth=".8" />
                </svg>
                Layers
              </div>
              <div className="flex h-[15px] items-center pl-[22px]">
                <Minus />
                <svg viewBox="0 0 14 12" className="mr-[4px] ml-[5px] h-[11px] w-[13px]">
                  <path d="M.5 11V1.500h5l1 2h7V11z" fill="#f5dd6c" stroke="#9c8428" />
                  <path d="M.5 5h13" stroke="#fff6c0" />
                </svg>
                <span className="whitespace-nowrap tracking-[-0.4px]">d:\CWC Rounds\Arel Rounds</span>
              </div>
              <div className="flex h-[15px] items-center pl-[38px]">
                <Minus />
                <span className="mr-[5px] ml-[6px] flex size-[10px] shrink-0 items-center justify-center border border-black bg-white">
                  <svg viewBox="0 0 8 8" className="size-[8px]"><path d="M1 4l2 2.500L7 1" fill="none" stroke="#000" strokeWidth="1.500" /></svg>
                </span>
                <span className="h-[15px] w-[81px] bg-[#0f78d4] pl-[1px] whitespace-nowrap tracking-[-0.520px] text-[#e6f2ff]">SharqCWCRoutes</span>
              </div>
              <i className="mt-[7px] ml-[65px] h-px w-[12px] bg-[#6fc586]" />
            </div>
          </div>
        </aside>
        <main className="w-[882px] shrink-0 border-t border-[#8c8c8c] bg-white">
          <RouteMap />
        </main>
        <div className="flex-1 border-t border-[#8c8c8c]" />
      </div>

      <div className="flex h-[12px] shrink-0 items-center bg-[#f2f2f2]">
        <span className="flex h-full w-[16px] items-center justify-center border-l-2 border-[#999] bg-[#cbe4f8]">
          <i className="mb-px size-[7px] border border-[#333] bg-[#86a860]" />
        </span>
        <svg viewBox="0 0 8 8" className="mb-[2px] ml-[3px] size-[8px]"><path d="M1 .5h4.500l2 2v5H1zM3 5h3M4 3h2" fill="#fff" stroke="#333" /></svg>
        <i className="ml-[5px] h-[10px] w-px bg-[#8a8a8a]" />
        <svg viewBox="0 0 10 10" className="mb-[2px] ml-[6px] size-[9px]" fill="none" stroke="#2f5f9a" strokeWidth="1.500">
          <path d="M1 4a4 4 0 0 1 7-1M9 6a4 4 0 0 1-7 1M8.500 1v2.500H6M1.500 9V6.500H4" />
        </svg>
        <svg viewBox="0 0 6 6" className="mb-[2px] ml-[7px] size-[5px]"><path d="M1 0v6M5 0v6" stroke="#2f5f9a" strokeWidth="1.600" /></svg>
        <i className="mb-[2px] ml-[18px] h-[2px] w-[1006px] bg-[#8b8b8b]" />
        <span className="h-full flex-1 bg-[#fafafa]" />
      </div>
      <footer className="h-[18px] shrink-0 border-t border-white bg-[#f0f0f0] pl-[1069px] leading-[20px] tracking-[-0.9px]">678</footer>
      <div className="h-[3px] shrink-0 bg-[#dcdcea]" />

      {/* floating feature window */}
      <section className="absolute top-[97px] left-[1083px] z-20 flex h-[583px] w-[174px] flex-col border-r-2 border-[#858585] bg-[#f2f2f2] pt-[2px] pl-[3px]">
        <PanelTitle title="Create Features" />
        <div className="flex h-[23px] shrink-0 items-center bg-[#f8f8f8] pt-px pl-[4px] text-[#888]">
          <Ic n="org" /><Caret className="mr-[2px] ml-[1px] !w-[5px] text-[#999]" /><Ic n="orgt" />
          <div className="ml-[2px] flex h-[19px] w-[81px] items-center border border-[#bcbcbc] bg-[#f1f1f1] pr-[3px] pl-[2px] tracking-[-0.4px]">
            &lt;Search&gt;
            <Caret className="ml-auto !w-[5px] text-[#999]" />
          </div>
          <Ic n="qs" /><Ic n="qs2" />
        </div>
        <div className="h-[430px] shrink-0 border border-[#a0a0a0] bg-[#f0f0f0] pt-[7px] text-center tracking-[-0.550px] whitespace-nowrap text-[#7c7c7c]">
          There are no templates to show.
        </div>
        <div className="flex h-[12px] shrink-0 items-center">
          <i className="ml-[55px] h-px w-[56px] bg-[#bdbdbd]" />
          <span className="ml-auto flex h-[10px] w-[9px] items-center justify-center border border-[#333] bg-white">
            <svg viewBox="0 0 6 8" className="h-[7px] w-[5px]" fill="none" stroke="#000" strokeWidth="1.400"><path d="M0 1l3 2 3-2M0 4l3 3 3-3" /></svg>
          </span>
          <span className="mr-px ml-px flex h-[10px] w-[9px] items-center justify-center border border-[#333] bg-white"><i className="h-[5px] w-px bg-[#555]" /></span>
        </div>
        <div className="flex-1 border border-b-0 border-[#a0a0a0] bg-[#f0f0f0] text-[#7c7c7c]">
          <div className="mt-[1px] -ml-[3px] flex h-[20px] items-center font-bold tracking-[-0.7px]">
            <Ic n="ed8" />
            <span className="-ml-[1px]">Construction Tools</span>
          </div>
          <p className="mt-[7px] text-center tracking-[-0.480px]">Select a template.</p>
        </div>
      </section>

      {/* auto-hide tabs */}
      <div className="absolute top-[129px] left-[1264px] z-20 flex w-[17px] flex-col gap-px text-[10px] tracking-[0.350px] text-[#777]">
        <div className="flex h-[59px] flex-col items-center rounded-l-sm border border-[#b5b5b5] bg-[#f4f4f4] pt-[1px]">
          <Ic n="catalog" className="!h-[17px]" />
          <span className="leading-[13px] [writing-mode:vertical-rl]">Catalog</span>
        </div>
        <div className="flex h-[56px] flex-col items-center rounded-l-sm border border-[#b5b5b5] bg-[#f4f4f4] pt-[1px]">
          <Ic n="searchw" className="!h-[17px]" />
          <span className="leading-[13px] [writing-mode:vertical-rl]">Search</span>
        </div>
      </div>
    </div>
  );
}
